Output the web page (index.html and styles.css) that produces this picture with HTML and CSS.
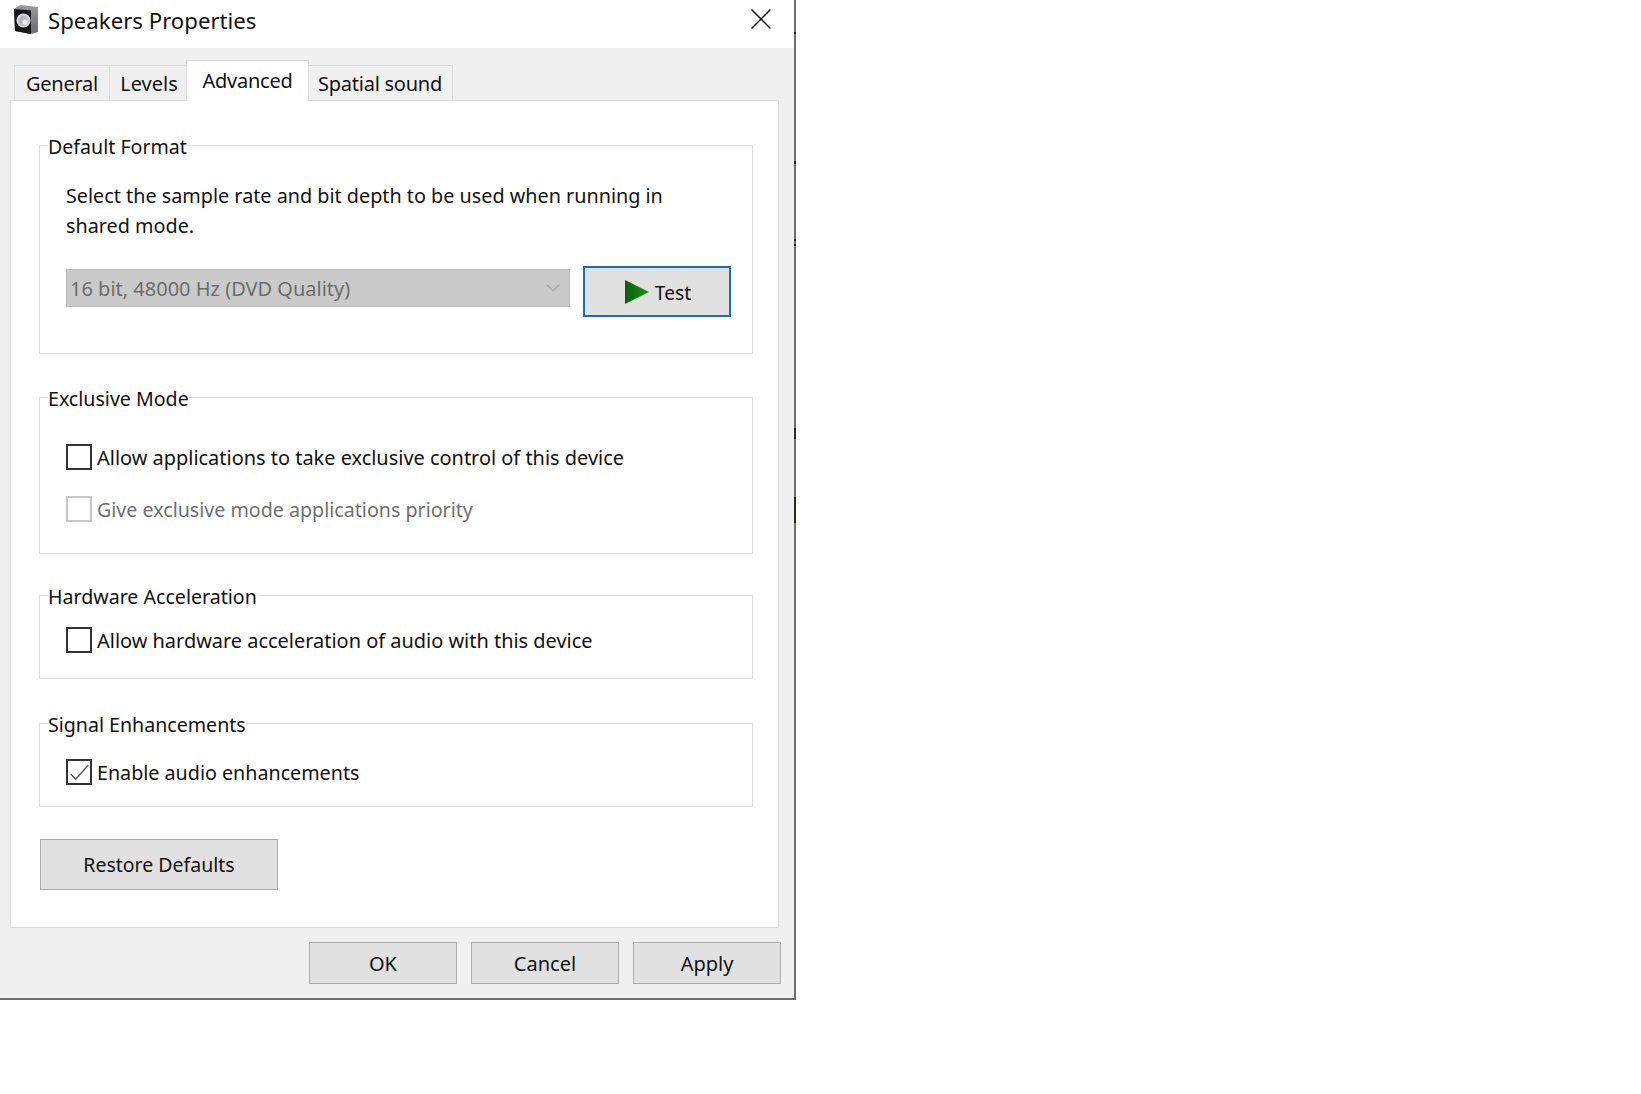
FILE: index.html
```html
<!DOCTYPE html>
<html lang="en">
<head>
<meta charset="utf-8">
<title>Speakers Properties</title>
<link rel="stylesheet" href="styles.css">
</head>
<body>
<div class="window">
  <span class="tick tick-a"></span>
  <span class="tick tick-b"></span>
  <span class="tick tick-c"></span>
  <span class="tick tick-d"></span>
  <span class="tick tick-e"></span>
  <span class="tick tick-f"></span>
  <header class="titlebar">
    <svg class="app-icon" width="24" height="29" viewBox="0 0 24 29">
      <defs><linearGradient id="side" x1="0" y1="0" x2="0" y2="1"><stop offset="0" stop-color="#9a9a9c"/><stop offset="1" stop-color="#6c6c6e"/></linearGradient></defs>
      <path d="M0 4 L6 0 L24 2 L24 27 L17 29 L1 26 Z" fill="url(#side)"/>
      <path d="M0 4 L17 5.5 L17 29 L1 26 Z" fill="#141416"/>
      <circle cx="9.5" cy="15.5" r="7" fill="#d6dadc"/>
      <circle cx="9.5" cy="15.5" r="5" fill="#b4babd"/>
      <circle cx="11" cy="17" r="2.6" fill="#e9ecee"/>
    </svg>
    <span class="title">Speakers Properties</span>
    <svg class="close" width="20" height="20" viewBox="0 0 20 20"><path d="M0.5 0.5 L19.5 19.5 M19.5 0.5 L0.5 19.5" stroke="#111" stroke-width="1.5" fill="none"/></svg>
  </header>
  <nav class="tabs">
    <span class="tab tab-general">General</span>
    <span class="tab tab-levels">Levels</span>
    <span class="tab tab-advanced">Advanced</span>
    <span class="tab tab-spatial">Spatial sound</span>
  </nav>
  <main class="panel">
    <fieldset class="group group-format">
      <legend>Default Format</legend>
      <p class="desc">Select the sample rate and bit depth to be used when running in shared mode.</p>
      <div class="format-row">
        <div class="select">
          <span>16 bit, 48000 Hz (DVD Quality)</span>
          <svg width="14" height="8" viewBox="0 0 14 8"><path d="M0.5 0.5 L7 7 L13.5 0.5" stroke="#a8a8a8" stroke-width="1.2" fill="none"/></svg>
        </div>
        <button class="btn btn-test" type="button">
          <svg width="24" height="24" viewBox="0 0 24 24">
            <defs><linearGradient id="play" x1="0" y1="0" x2="1" y2="0"><stop offset="0" stop-color="#0b5f0b"/><stop offset="1" stop-color="#1c8f1c"/></linearGradient></defs>
            <path d="M0 0 L24 12 L0 24 Z" fill="url(#play)"/>
          </svg>
          <span class="test-label">Test</span>
        </button>
      </div>
    </fieldset>
    <fieldset class="group group-exclusive">
      <legend>Exclusive Mode</legend>
      <label class="check"><span class="box"></span>Allow applications to take exclusive control of this device</label>
      <label class="check disabled"><span class="box"></span>Give exclusive mode applications priority</label>
    </fieldset>
    <fieldset class="group group-hw">
      <legend>Hardware Acceleration</legend>
      <label class="check"><span class="box"></span>Allow hardware acceleration of audio with this device</label>
    </fieldset>
    <fieldset class="group group-signal">
      <legend>Signal Enhancements</legend>
      <label class="check"><span class="box"><svg class="tickmark" width="22" height="22" viewBox="0 0 22 22"><path d="M2.7 13 L7.7 18.3 L20.3 4" stroke="#555" stroke-width="1.3" fill="none"/></svg></span>Enable audio enhancements</label>
    </fieldset>
    <button class="btn btn-restore" type="button">Restore Defaults</button>
  </main>
  <footer class="actions">
    <button class="btn btn-action" type="button">OK</button>
    <button class="btn btn-action" type="button">Cancel</button>
    <button class="btn btn-action" type="button">Apply</button>
  </footer>
</div>
</body>
</html>
```

FILE: styles.css
```css
* { box-sizing: border-box; }
html, body { margin: 0; padding: 0; background: #fff; }
body { font-family: "Noto Sans", "Open Sans", sans-serif; font-size: 19.8px; color: #111; }

.window {
  position: relative;
  width: 796px;
  height: 1000px;
  background: #f0f0f0;
  border-right: 2px solid #6e6e6e;
  border-bottom: 2px solid #6e6e6e;
  display: flex;
  flex-direction: column;
}

/* Small dark capture artefacts lying over the window's right edge */
.tick { position: absolute; right: -2px; width: 2px; height: 2px; background: #2a2a2a; }
.tick-a { top: 32px; }
.tick-b { top: 161px; height: 3px; }
.tick-c { top: 239px; }
.tick-d { top: 244px; }
.tick-e { top: 428px; height: 11px; }
.tick-f { top: 497px; height: 26px; background: #30261c; }

.titlebar {
  height: 48px;
  flex: none;
  background: #fff;
  display: flex;
  align-items: center;
  padding: 0 23px 0 14px;
}
.app-icon { margin-bottom: 10px; flex: none; }
.title { font-size: 22.2px; margin: -8px 0 0 10px; flex: 1; }
.close { flex: none; margin-bottom: 10px; }

.tabs {
  height: 52px;
  flex: none;
  display: flex;
  align-items: flex-end;
  padding-left: 14px;
  position: relative;
  z-index: 1;
}
.tab {
  height: 35px;
  background: #f0f0f0;
  border: 1px solid #dcdcdc;
  border-bottom: none;
  margin-left: -1px;
  display: flex;
  align-items: center;
  justify-content: center;
  font-size: 20px;
  letter-spacing: -0.25px;
}
.tab-general { width: 96px; margin-left: 0; }
.tab-levels { width: 78px; letter-spacing: 0; padding-left: 2px; }
.tab-advanced { width: 123px; height: 41px; background: #fff; margin-bottom: -1px; padding-bottom: 2px; z-index: 1; }
.tab-spatial { width: 145px; padding-right: 1px; }

.panel {
  width: 769px;
  height: 828px;
  flex: none;
  margin-left: 10px;
  background: #fff;
  border: 1px solid #dcdcdc;
  padding: 32px 0 0 28px;
}

.group {
  width: 714px;
  margin: 0 0 30px;
  padding: 0 21px 0 26px;
  border: 1px solid #dcdcdc;
  min-inline-size: 0;
}
.group legend { padding: 0; margin-left: -18px; line-height: 24px; font-size: 19.6px; background: #fff; position: relative; top: 2px; }
.group-format { height: 221px; margin-bottom: 31px; }
.group-exclusive { height: 169px; margin-bottom: 29px; }
.group-hw { height: 96px; margin-bottom: 32px; }
.group-signal { height: 96px; margin-bottom: 32px; }

.desc { margin: 24px 0 0; line-height: 29.5px; width: 640px; }

.format-row { display: flex; align-items: flex-start; gap: 13px; margin-top: 26px; }
.select {
  width: 504px;
  height: 38px;
  margin-top: 3px;
  background: #cacaca;
  border: 1px solid #bababa;
  color: #6d6d6d;
  font-size: 20px;
  display: flex;
  align-items: center;
  justify-content: space-between;
  padding: 0 9px 0 3px;
}

.btn {
  font: inherit;
  color: #111;
  background: #e1e1e1;
  border: 1px solid #adadad;
  padding: 0;
  display: flex;
  align-items: center;
  justify-content: center;
}
.btn-test { width: 148px; height: 51px; border: 2px solid #1a6fb0; gap: 6px; padding-left: 2px; flex: none; }
.test-label { font-size: 19.2px; margin-top: 1px; }
.btn-restore { width: 238px; height: 51px; margin-left: 1px; font-size: 19.5px; }
.btn-action { width: 148px; height: 42px; font-size: 20px; }

.check { display: flex; align-items: center; height: 26px; white-space: nowrap; font-size: 19.95px; }
.check .box {
  width: 26px;
  height: 26px;
  flex: none;
  border: 2px solid #333;
  margin-right: 5px;
}
.tickmark { display: block; }
.check.disabled { color: #6f6f6f; font-size: 19.65px; }
.check.disabled .box { border-color: #c6c6c6; }
.group-exclusive .check { margin-top: 35px; }
.group-exclusive .check.disabled { margin-top: 26px; }
.group-hw .check { margin-top: 20px; }
.group-signal .check { margin-top: 24px; font-size: 19.7px; }

.actions {
  display: flex;
  justify-content: flex-end;
  gap: 14px;
  padding: 14px 13px 0 0;
}
```
